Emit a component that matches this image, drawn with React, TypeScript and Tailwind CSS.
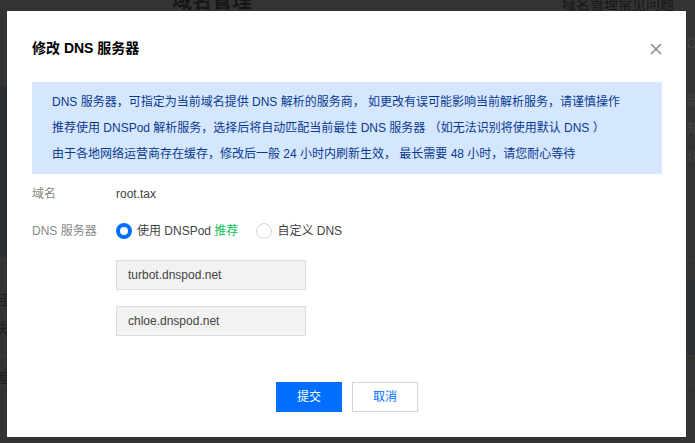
import React from "react";

const font = { fontFamily: '"Liberation Sans", Arial, "Noto Sans CJK SC", sans-serif' };

function Background() {
  return (
    <div className="absolute inset-0 bg-[#333333]">
      <div className="absolute left-[172px] top-[-11px] text-[20px] font-bold text-[#161616] leading-[24px]">域名管理</div>
      <div className="absolute left-[562px] top-[-4px] text-[14px] text-[#161616] leading-[16px]">域名管理常见问题</div>
      <div className="absolute left-[0px] top-[86px] w-[7px] h-[170px] bg-[#2a2e35]" />
      <div className="absolute left-0 top-[260px] w-full h-px bg-[#3a3a3a]" />
      <div className="absolute left-0 top-[355px] w-full h-px bg-[#3a3a3a]" />
      <div className="absolute left-0 top-[385px] w-full h-px bg-[#3a3a3a]" />
      <div className="absolute right-0 top-[280px] w-[9px] h-[75px] bg-[#2c2f33]" />
      <div className="absolute left-[-6px] top-[290px] text-[14px] text-[#1e1e1e]">目</div>
      <div className="absolute left-[-6px] top-[318px] text-[14px] text-[#1e1e1e]">决</div>
      <div className="absolute left-[-6px] top-[368px] text-[14px] text-[#1e1e1e]">理</div>
      <div className="absolute left-[687px] top-[33px] text-[14px] text-[#444]">D</div>
      <div className="absolute left-[687px] top-[86px] text-[13px] leading-[28px] text-[#444] w-[20px]">器<br />知<br />价</div>
    </div>
  );
}

export default function App() {
  return (
    <div className="relative w-[695px] h-[443px] overflow-hidden" style={font}>
      <Background />
      <div className="absolute left-[7px] top-[11px] w-[679px] h-[426px] bg-white px-[25px] pt-[27px] flex flex-col">
        <div className="flex items-center justify-between h-[20px]">
          <div className="text-[14px] font-bold text-black leading-[20px]">修改 DNS 服务器</div>
          <svg width="12" height="12" viewBox="0 0 12 12" className="mr-[-1px] mt-[2px]">
            <path d="M1 1 L11 11 M11 1 L1 11" stroke="#8a8a8a" strokeWidth="1.6" />
          </svg>
        </div>
        <div className="mt-[24px] bg-[#d5e7ff] py-[7px] pl-[20px] text-[12px] leading-[26px] text-[#0a3a8f] w-[630px]">
          <div>DNS 服务器，可指定为当前域名提供 DNS 解析的服务商， 如更改有误可能影响当前解析服务，请谨慎操作</div>
          <div>推荐使用 DNSPod 解析服务，选择后将自动匹配当前最佳 DNS 服务器 （如无法识别将使用默认 DNS ）</div>
          <div>由于各地网络运营商存在缓存，修改后一般 24 小时内刷新生效， 最长需要 48 小时，请您耐心等待</div>
        </div>
        <div className="mt-[10px] flex items-center h-[20px] text-[12px]">
          <div className="w-[84px] text-[#888]">域名</div>
          <div className="text-[#444]">root.tax</div>
        </div>
        <div className="mt-[17px] flex items-center h-[20px] text-[12px]">
          <div className="w-[84px] text-[#888]">DNS 服务器</div>
          <div className="flex items-center">
            <span className="w-[16px] h-[16px] rounded-full border-[4px] border-[#006eff] bg-white box-border" />
            <span className="ml-[5px] text-[#444]">使用 DNSPod <span className="text-[#0abf5b]">推荐</span></span>
          </div>
          <div className="flex items-center ml-[18px]">
            <span className="w-[16px] h-[16px] rounded-full border border-[#cfd5de] bg-white box-border" />
            <span className="ml-[5px] text-[#444]">自定义 DNS</span>
          </div>
        </div>
        <div className="mt-[19px] ml-[84px] flex flex-col gap-[16px]">
          <div className="w-[190px] h-[30px] bg-[#f2f2f2] border border-[#dddddd] px-[11px] flex items-center text-[12px] text-[#444]">turbot.dnspod.net</div>
          <div className="w-[190px] h-[30px] bg-[#f2f2f2] border border-[#dddddd] px-[11px] flex items-center text-[12px] text-[#444]">chloe.dnspod.net</div>
        </div>
        <div className="mt-[46px] flex justify-center gap-[10px] pl-[1px]">
          <button className="w-[66px] h-[30px] bg-[#006eff] text-white text-[12px]">提交</button>
          <button className="w-[66px] h-[30px] bg-white border border-[#cfd5de] text-[#006eff] text-[12px]">取消</button>
        </div>
      </div>
    </div>
  );
}
